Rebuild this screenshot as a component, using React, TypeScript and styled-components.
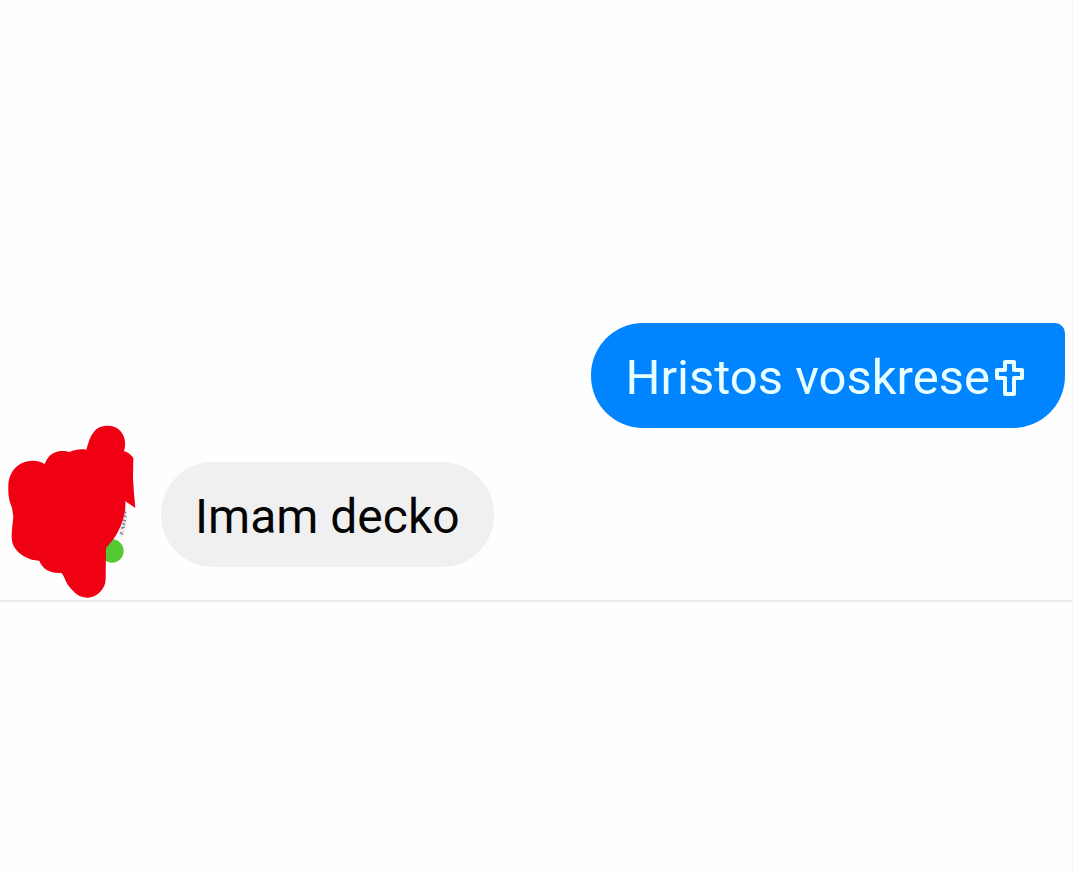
import React from "react";
import styled, { createGlobalStyle } from "styled-components";

const GlobalStyle = createGlobalStyle`
  *, *::before, *::after {
    box-sizing: border-box;
  }
  body {
    margin: 0;
    background: #fefefe;
    font-family: Roboto, "Liberation Sans", sans-serif;
  }
`;

const Page = styled.main`
  min-height: 100vh;
  border-right: 1px solid #f7f7f7;
`;

const Thread = styled.section`
  display: flex;
  flex-direction: column;
  gap: 34px;
  padding: 323px 7px 33px 8px;
  border-bottom: 2px solid #ebebeb;
`;

const MessageRow = styled.div<{ $own?: boolean }>`
  display: flex;
  justify-content: ${({ $own }) => ($own ? "flex-end" : "flex-start")};
  gap: 26px;
`;

const Bubble = styled.p<{ $own?: boolean }>`
  display: flex;
  align-items: center;
  gap: 5px;
  margin: 0;
  padding: 27px ${({ $own }) => ($own ? "40px" : "34px")} 22px 34px;
  border-radius: ${({ $own }) => ($own ? "52px 10px 52px 52px" : "52px")};
  background: ${({ $own }) => ($own ? "#0084ff" : "#f0f0f0")};
  color: ${({ $own }) => ($own ? "#e9ffff" : "#050505")};
  font-size: ${({ $own }) => ($own ? "49px" : "48px")};
  line-height: 56px;
  white-space: nowrap;
`;

const AvatarSlot = styled.div`
  position: relative;
  flex: none;
  width: 127px;
`;

const AvatarArt = styled.svg`
  position: absolute;
  left: -8px;
  bottom: -43px;
  width: 150px;
  height: 195px;
`;

const CrossIcon = styled.svg`
  flex: none;
  width: 30px;
  height: 36px;
`;

function Avatar() {
  return (
    <AvatarSlot>
      <AvatarArt viewBox="0 0 450 585" role="img" aria-label="Contact, active now">
        <path d="M370 268l11 20-1 42-12 36-10-4 6-40z" fill="#ece8ee" />
        <path
          d="M371 290l8 3M370 302l9 3M368 315l10 3M367 326l8 2M363 340l11-4M360 352l9 6"
          stroke="#8d8492"
          strokeWidth="5"
        />
        <circle cx="336" cy="408" r="35" fill="#55c932" />
        <path
          d="M259 104C266 82 269 65 282 50C296 34 314 31 333 33C357 36 374 58 375 82C376 93 374 102 372 109C383 111 392 119 400 129L399 190L402 236L406 279L376 259C378 291 368 325 352 354C344 369 334 381 318 399L317 494C315 522 293 546 263 548C239 549 221 533 207 514C195 498 193 482 184 473C159 477 127 465 118 437C92 438 60 422 45 400C32 382 35 359 36 344L40 305L36 278C26 255 24 238 25 213C26 171 52 141 91 138C111 136 124 141 134 147C141 128 156 110 182 108C195 107 201 109 209 111C225 103 242 101 259 104Z"
          fill="#ef0012"
        />
      </AvatarArt>
    </AvatarSlot>
  );
}

function Cross() {
  return (
    <CrossIcon viewBox="0 0 30 36" role="img" aria-label="Cross">
      <path
        d="M10 2H19V10H27V18H19V34H10V18H2V10H10Z"
        fill="none"
        stroke="currentColor"
        strokeWidth="4"
        strokeLinejoin="round"
      />
    </CrossIcon>
  );
}

export default function App() {
  return (
    <>
      <GlobalStyle />
      <Page>
        <Thread aria-label="Conversation">
          <MessageRow $own>
            <Bubble $own>
              <span>Hristos voskrese</span>
              <Cross />
            </Bubble>
          </MessageRow>
          <MessageRow>
            <Avatar />
            <Bubble>Imam decko</Bubble>
          </MessageRow>
        </Thread>
      </Page>
    </>
  );
}
